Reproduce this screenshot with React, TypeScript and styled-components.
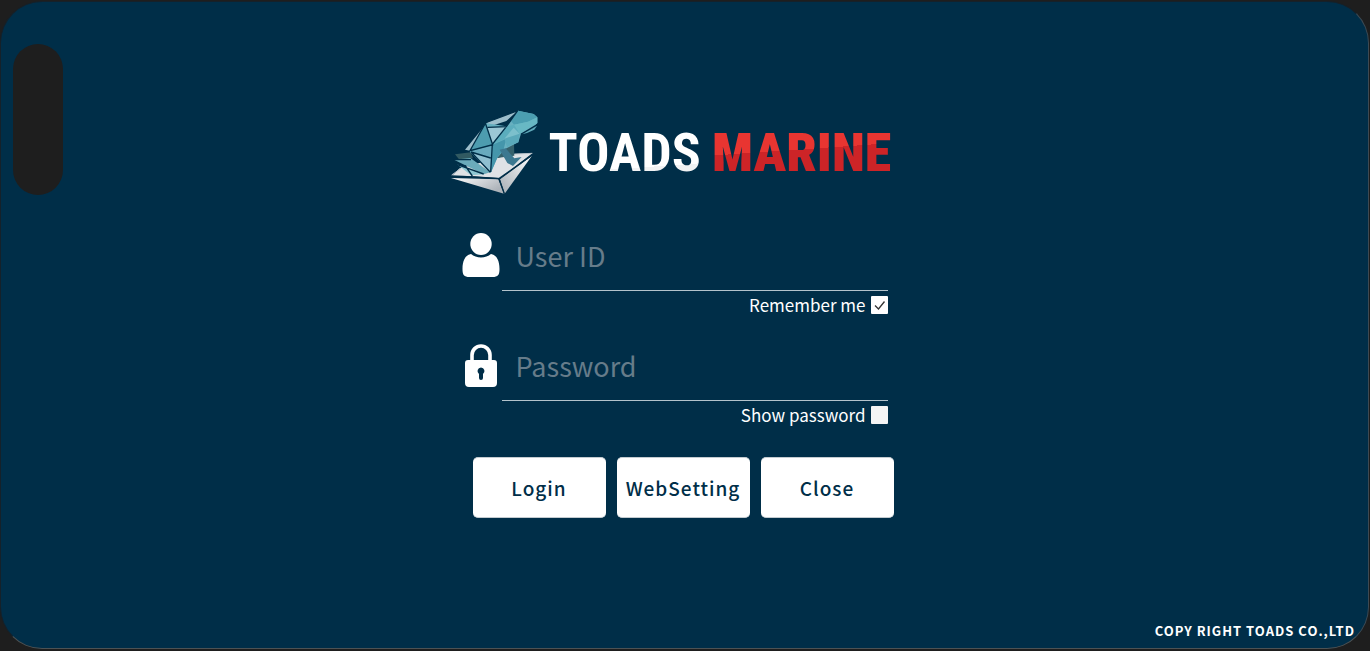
import React, { useState } from "react";
import styled, { createGlobalStyle } from "styled-components";

const navy = "#002e48";
const casing = "#1e1e1e";

const GlobalStyle = createGlobalStyle`
  *, *::before, *::after { box-sizing: border-box; }
  body {
    margin: 0;
    background: ${casing};
    color: #fff;
    font-family: "Noto Sans CJK KR", "Noto Sans", sans-serif;
  }
`;

const Device = styled.div`
  display: flex;
  min-height: 100vh;
  padding: 1px 1px 2px 0;
`;

const Screen = styled.div`
  position: relative;
  display: flex;
  flex: 1;
  flex-direction: column;
  border: 1px solid #15212a;
  border-right-color: #3c4a54;
  border-bottom-color: #4c5254;
  border-radius: 42px;
  background: ${navy};
`;

const CameraCutout = styled.div`
  position: absolute;
  top: 42px;
  left: 12px;
  width: 50px;
  height: 151px;
  border-radius: 25px;
  background: ${casing};
`;

const Main = styled.main`
  display: flex;
  flex: 1;
  justify-content: center;
  padding: 103px 26px 0 0;
`;

const Panel = styled.form`
  width: 100%;
  max-width: 444px;
`;

const Brand = styled.h1`
  display: flex;
  align-items: center;
  height: 95px;
  margin: 0 0 26px;
`;

const ToadMark = styled.svg`
  flex: none;
  width: 100px;
  height: 95px;
  margin-left: -5px;
`;

const WordMark = styled.span`
  display: flex;
  gap: 11px;
  margin-left: 4px;
  font: 700 54px/60px "Roboto Condensed", "Liberation Sans Narrow", "Liberation Sans", sans-serif;
`;

const Word = styled.span<{ $from: string; $to: string; $split: number; $weight: number }>`
  background: linear-gradient(176deg, ${(p) => p.$from} ${(p) => p.$split}%, ${(p) => p.$to} ${(p) => p.$split}%);
  background-clip: text;
  color: transparent;
  font-weight: ${(p) => p.$weight};
`;

const Field = styled.div`
  display: flex;
  height: 65px;
`;

const FieldLabel = styled.label`
  display: flex;
  flex: none;
  justify-content: center;
  width: 52px;
  padding: 6px 0 0 10px;
`;

const FieldIcon = styled.svg`
  width: 38px;
  height: 46px;
  fill: #fff;
`;

const TextInput = styled.input`
  flex: 1;
  min-width: 0;
  margin-right: 6px;
  padding: 0 14px 4px;
  border: 0;
  border-bottom: 1px solid #b4c3cc;
  border-radius: 0;
  outline: 0;
  background: transparent;
  color: #fff;
  font: 400 27px/40px "Noto Sans CJK KR", "Noto Sans", sans-serif;

  &::placeholder {
    color: #667c8a;
    opacity: 1;
  }
`;

const Option = styled.label`
  display: flex;
  align-items: center;
  justify-content: flex-end;
  gap: 5px;
  height: 28px;
  margin: 0 6px 17px 0;
  font-size: 17px;
  line-height: 26px;
`;

const TickBox = styled.span`
  display: grid;
  width: 17px;
  height: 18px;

  > * { grid-area: 1 / 1; }
`;

const Tick = styled.input`
  width: 17px;
  height: 18px;
  margin: 0;
  appearance: none;
  border-radius: 1px;
  background: #f5f5f5;

  &:checked { background: #fff; }
  & + svg { visibility: hidden; }
  &:checked + svg { visibility: visible; }
`;

const TickMark = styled.svg`
  width: 17px;
  height: 18px;
  fill: none;
  stroke: #333;
  stroke-width: 1.3;
  pointer-events: none;
`;

const Actions = styled.div`
  display: grid;
  grid-template-columns: repeat(3, 1fr);
  gap: 11px;
  margin: 28px 0 0 23px;
`;

const Action = styled.button`
  height: 61px;
  padding: 0;
  border: 1px solid #c3cbd0;
  border-width: 1px 0;
  border-radius: 5px;
  background: #fff;
  color: ${navy};
  font: 500 19px/30px "Noto Sans CJK KR", "Noto Sans", sans-serif;
  letter-spacing: 1px;
`;

const Footer = styled.footer`
  padding: 0 13px 7px;
  text-align: right;
  font-size: 13px;
  font-weight: 700;
  line-height: 20px;
  letter-spacing: 1px;
`;

function Toad() {
  return (
    <ToadMark viewBox="0 0 300 285" aria-hidden="true">
      <defs>
        <linearGradient id="baseLeft" x1="0" y1="0" x2="1" y2="0.5">
          <stop offset="0" stopColor="#fff" />
          <stop offset="1" stopColor="#adb3b9" />
        </linearGradient>
        <linearGradient id="baseRight" x1="1" y1="0" x2="0" y2="1">
          <stop offset="0" stopColor="#fff" />
          <stop offset="1" stopColor="#a5adb4" />
        </linearGradient>
      </defs>
      <path fill="#dfe2e5" d="M20 213 44 190 140 164 195 148 262 145 166 219 88 214z" />
      <path fill="url(#baseLeft)" d="M18 219 160 223 177 266z" />
      <path fill="url(#baseRight)" d="M261 152 165 223 179 266z" />
      <path fill="#315961" d="M30 148 77 142 84 160 42 163z" />
      <path fill="#35616c" d="M168 126 207 116 208 152 150 160z" />
      <path fill="#6babba" d="M27 164 76 159 136 202 116 208z" />
      <path fill="#8fc7d2" d="M36 178 118 208 78 211z" />
      <path fill="#9dbecb" d="M218 17 128 51 60 134 75 137 127 67 184 48z" />
      <path
        fill="#68b0c0"
        d="M121 54 74 140 137 204 157 158 180 132 220 112 228 86 268 66 277 54 277 37 266 27 219 17 184 64z"
      />
      <path fill="#4b9eb1" d="M219 17 266 27 277 37 249 50 207 59 198 48z" />
      <path fill="#68b8c4" d="M249 50 277 37 277 54 224 86 207 59z" />
      <path fill="#4596ab" d="M143 119 184 101 176 132 157 158 138 202z" />
      <path fill="#68aabe" d="M77 139 143 119 137 159z" />
      <path fill="#8fbfd0" d="M77 141 137 160 136 202z" />
      <path fill="#4d9caf" d="M121 54 143 119 77 139z" />
      <path fill="#9cc7d5" d="M126 67 184 65 142 118z" />
      <path fill="#5badbd" d="M184 65 207 59 224 86 180 101 142 118z" />
      <path fill="#5aa9ba" d="M178 101 206 72 224 86 220 112 186 126z" />
      <path fill="#7cc0cc" d="M178 101 206 68 224 86z" />
      <path fill="#3c7890" d="M164 134 182 130 208 160 230 156 204 183 187 174z" />
      <path
        fill="none"
        stroke={navy}
        strokeWidth="4"
        d="M218 17 122 53 75 137 143 119 121 54 M128 67 184 65 218 17 M184 65 142 118 137 201 M78 141 137 159 M78 141 136 202 M26 164 78 164 M37 179 116 207 M60 181 82 213 M18 213 54 214 162 221 263 149 M162 221 178 266 M228 88 278 58"
      />
      <path fill="#5fa9ba" d="M232 88 276 62 268 74 246 84z" />
      <path fill="none" stroke="#b7c1c9" strokeWidth="3" d="M20 210 48 190M208 147 262 145" />
    </ToadMark>
  );
}

export default function App() {
  const [remember, setRemember] = useState(true);
  const [showPassword, setShowPassword] = useState(false);

  return (
    <>
      <GlobalStyle />
      <Device>
        <Screen>
          <CameraCutout />
          <Main>
            <Panel onSubmit={(e) => e.preventDefault()}>
              <Brand>
                <Toad />
                <WordMark>
                  <Word $from="#fff" $to="#f1f2f3" $split={72} $weight={700}>TOADS</Word>
                  <Word $from="#e83531" $to="#cd2427" $split={45} $weight={900}>MARINE</Word>
                </WordMark>
              </Brand>

              <Field>
                <FieldLabel htmlFor="user-id" aria-label="User ID">
                  <FieldIcon viewBox="0 0 38 46" aria-hidden="true">
                    <ellipse cx="19" cy="12" rx="10.7" ry="11" />
                    <path d="M9 22c5 4.500 15 4.500 20 0 6 1 8.500 7 8.500 15 0 6-1.500 8-7 8h-23c-5.500 0-7-2-7-8C.5 29 3 23 9 22z" />
                  </FieldIcon>
                </FieldLabel>
                <TextInput id="user-id" type="text" placeholder="User ID" />
              </Field>
              <Option>
                Remember me
                <TickBox>
                  <Tick type="checkbox" checked={remember} onChange={(e) => setRemember(e.target.checked)} />
                  <TickMark viewBox="0 0 17 18" aria-hidden="true">
                    <path d="M4 9.500 7.500 13 13.500 5.500" />
                  </TickMark>
                </TickBox>
              </Option>

              <Field>
                <FieldLabel htmlFor="password" aria-label="Password">
                  <FieldIcon viewBox="0 0 38 46" aria-hidden="true">
                    <path d="M10 20v-7a9 9 0 0 1 18 0v7" fill="none" stroke="#fff" strokeWidth="3.6" />
                    <path
                      fillRule="evenodd"
                      d="M6 18h26q3 0 3 3v20q0 4-4 4H7q-4 0-4-4V21q0-3 3-3zM19 25.500a3.600 3.600 0 0 0-2 6.500V36q0 2 2 2t2-2v-4a3.600 3.600 0 0 0-2-6.500z"
                    />
                  </FieldIcon>
                </FieldLabel>
                <TextInput id="password" type={showPassword ? "text" : "password"} placeholder="Password" />
              </Field>
              <Option>
                Show password
                <TickBox>
                  <Tick type="checkbox" checked={showPassword} onChange={(e) => setShowPassword(e.target.checked)} />
                  <TickMark viewBox="0 0 17 18" aria-hidden="true">
                    <path d="M4 9.500 7.500 13 13.500 5.500" />
                  </TickMark>
                </TickBox>
              </Option>

              <Actions>
                <Action type="submit">Login</Action>
                <Action type="button">WebSetting</Action>
                <Action type="button">Close</Action>
              </Actions>
            </Panel>
          </Main>
          <Footer>COPY RIGHT TOADS CO.,LTD</Footer>
        </Screen>
      </Device>
    </>
  );
}
